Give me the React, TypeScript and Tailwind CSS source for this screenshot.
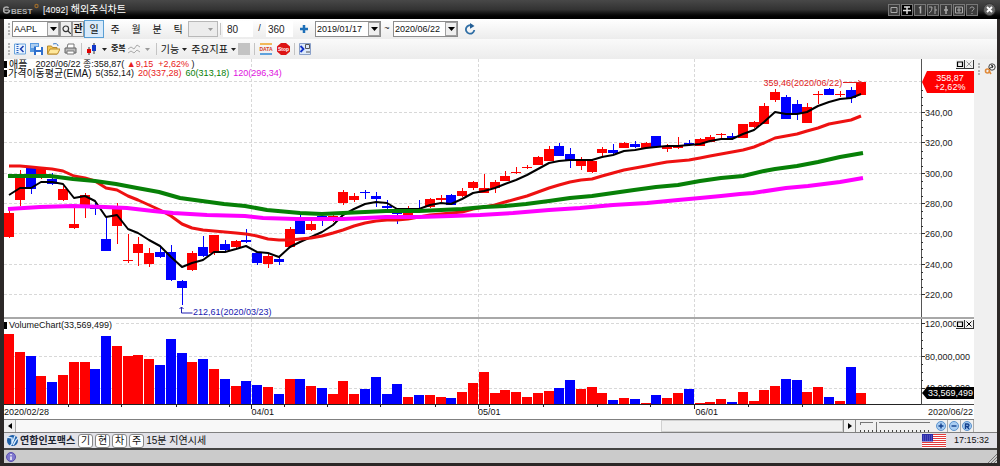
import type { ReactNode } from 'react';

const RED = '#ff0000';
const BLUE = '#0000ff';
const STEP = 10.79;
const FIRST = 9;
const PLOT_LEFT = 4;
const PLOT_WIDTH = 917;

type Candle = ['r' | 'b', number, number, number, number, number];

// colour, body top, body bottom, high, low, volume top
const candles: Candle[] = [
  ['r', 213, 237, 208, 238, 334], ['r', 174, 200, 170, 206, 352], ['b', 168, 189, 167, 194, 356], ['r', 167, 177, 167, 179, 376],
  ['b', 179, 184, 173, 185, 382], ['r', 189, 200, 186, 201, 375], ['r', 224, 228, 206, 229, 362], ['r', 195, 206, 193, 218, 362],
  ['b', 207, 209, 203, 215, 369], ['b', 239, 251, 217, 251, 336], ['r', 206, 226, 203, 244, 346], ['r', 260, 261, 234, 263, 356],
  ['r', 244, 253, 237, 266, 355], ['r', 253, 264, 248, 267, 359], ['b', 252, 257, 247, 258, 365], ['b', 252, 280, 245, 281, 339],
  ['b', 281, 288, 280, 305, 353], ['r', 253, 270, 251, 271, 362], ['b', 247, 256, 236, 257, 359], ['r', 235, 253, 235, 255, 369],
  ['b', 244, 250, 240, 251, 379], ['r', 241, 247, 240, 249, 386], ['b', 240, 242, 229, 243, 381], ['b', 253, 263, 252, 265, 385],
  ['r', 256, 264, 253, 268, 387], ['b', 259, 262, 256, 265, 394], ['r', 229, 247, 227, 248, 379], ['b', 220, 234, 215, 234, 379],
  ['r', 224, 230, 220, 231, 386], ['b', 216, 218, 214, 226, 388], ['r', 216, 221, 214, 222, 394], ['r', 192, 203, 190, 205, 381],
  ['r', 196, 200, 193, 202, 394], ['b', 192, 193, 190, 199, 389], ['b', 196, 199, 192, 207, 377], ['b', 206, 208, 200, 209, 394],
  ['b', 209, 214, 208, 224, 384], ['r', 210, 215, 206, 218, 397], ['b', 209, 211, 200, 212, 395], ['r', 199, 207, 198, 208, 395],
  ['r', 198, 200, 195, 202, 397], ['b', 195, 205, 194, 205, 398], ['r', 191, 196, 188, 197, 392], ['r', 182, 188, 181, 190, 383],
  ['r', 188, 193, 174, 193, 372], ['r', 182, 188, 180, 193, 393], ['r', 176, 181, 171, 181, 390], ['r', 172, 173, 167, 174, 392],
  ['r', 167, 168, 165, 169, 397], ['r', 157, 165, 156, 165, 393], ['r', 149, 161, 146, 161, 391], ['b', 146, 156, 143, 156, 388],
  ['b', 154, 160, 148, 168, 380], ['r', 159, 166, 157, 170, 389], ['r', 161, 172, 160, 173, 387], ['r', 149, 153, 147, 156, 393],
  ['b', 150, 153, 144, 154, 400], ['r', 143, 148, 142, 148, 398], ['b', 144, 147, 141, 148, 399], ['r', 143, 148, 142, 148, 403],
  ['b', 136, 147, 136, 148, 395], ['r', 146, 149, 144, 152, 398], ['r', 146, 148, 137, 149, 393], ['b', 143, 145, 140, 146, 389],
  ['r', 139, 146, 138, 146, 403], ['r', 137, 142, 135, 142, 402], ['r', 134, 135, 133, 138, 399], ['b', 136, 138, 133, 140, 402],
  ['r', 124, 138, 124, 138, 392], ['r', 122, 127, 121, 128, 401], ['r', 106, 124, 103, 124, 390], ['r', 92, 100, 89, 102, 386],
  ['b', 97, 119, 95, 119, 379], ['b', 104, 113, 100, 120, 380], ['r', 107, 123, 103, 123, 392], ['r', 94, 95, 91, 104, 387],
  ['b', 89, 95, 88, 95, 397], ['r', 94, 95, 91, 97, 401], ['b', 90, 98, 87, 103, 367], ['r', 82, 95, 82, 95, 393],
];

const ema5 = [
  195, 188, 188, 182, 182, 184, 198, 196, 201, 217, 215, 229, 233, 240, 246, 257, 267, 263, 260, 252, 252, 249, 246, 252, 253, 257,
  247, 242, 237, 232, 225, 215, 209, 204, 202, 203, 209, 209, 209, 205, 203, 204, 199, 193, 191, 188, 184, 180, 175, 169, 163, 161,
  160, 160, 160, 157, 155, 151, 150, 148, 147, 146, 146, 145, 144, 141, 139, 139, 134, 130, 122, 112, 114, 114, 112, 106, 102, 99,
  98, 94,
];

const ema20 = [
  166, 166, 167, 168, 169, 171, 176, 178, 181, 188, 190, 196, 200, 205, 210, 216, 224, 228, 230, 231, 232, 233, 234, 236, 239, 240,
  240, 239, 238, 236, 233, 230, 226, 223, 221, 220, 220, 219, 217, 215, 214, 213, 212, 209, 207, 205, 202, 199, 196, 192, 188, 185,
  182, 180, 179, 176, 173, 170, 168, 166, 164, 162, 161, 160, 158, 156, 154, 152, 150, 147, 143, 138, 136, 134, 131, 128, 124, 122,
  120, 116,
];

const ema60 =
  '8,176 50,176 73,179 95,181 116,184 137,188 159,192 180,198 202,201 224,204 245,206 267,210 278,211 300,213 322,214 343,213 365,212 386,211 419,211 441,210 462,209 484,207 505,206 526,204 549,201 570,198 592,196 613,193 634,190 656,187 678,185 700,181 721,178 743,176 764,171 775,169 797,166 818,162 840,157 863,153';

const ema120 =
  '8,209 40,207 73,206 105,207 127,208 153,211 173,213 207,215 245,216 263,218 297,219 343,219 386,217 419,217 451,216 480,215 513,213 549,210 580,208 613,205 647,203 678,200 700,198 721,196 740,194 753,193 786,188 808,186 840,182 863,178';

const priceTicks = [340, 320, 300, 280, 260, 240, 220];
const priceY = (price: number) => Math.round(112 + (340 - price) * 1.517);
const x = (i: number) => Math.round(FIRST + i * STEP);
const toPoints = (values: number[]) => values.map((v, i) => `${x(i)},${v}`).join(' ');
const monthLines = [251, 478, 694];
const weekTicks = [68, 121, 176, 229, 284, 327, 380, 435, 489, 543, 597, 650, 748, 802];

function Grip() {
  return <span className="h-3 w-0 shrink-0 border-l-2 border-dotted border-[#b4b4b4]" />;
}

function Divider() {
  return <span className="h-3 w-px shrink-0 bg-[#c4c4c4]" />;
}

function Combo({ label, value, className }: { label: string; value: string; className: string }) {
  return (
    <div className={`relative h-4 shrink-0 border border-[#8c8c8c] bg-white ${className}`}>
      <select aria-label={label} className="block h-full w-full appearance-none bg-transparent pl-px leading-none outline-none">
        <option>{value}</option>
      </select>
      <span className="pointer-events-none absolute inset-y-0 right-0 flex w-3 items-center justify-center border border-[#a0a0a0] bg-[#efefef]">
        <svg viewBox="0 0 7 4" className="h-1 w-[7px]"><path d="M0 0h7L3.5 4z" fill="#000" /></svg>
      </span>
    </div>
  );
}

function Caret({ color = '#222' }: { color?: string }) {
  return <svg viewBox="0 0 5 3" className="h-[3px] w-[5px] shrink-0"><path d="M0 0h5L2.5 3z" fill={color} /></svg>;
}

function TitleButton({ label, active, children }: { label: string; active?: boolean; children: ReactNode }) {
  return (
    <button aria-label={label} className={`size-3 border border-[#777] text-[#aaa] ${active ? 'bg-black' : 'bg-[#3c3c3c]'}`}>
      <svg viewBox="0 0 10 10" className="size-full" fill="none" stroke="currentColor">{children}</svg>
    </button>
  );
}

function TitleBar() {
  return (
    <header className="flex h-[19px] items-center justify-between bg-linear-to-b from-[#484848] via-[#333] via-50% to-black pr-1 pl-[3px] text-white">
      <div className="flex items-center">
        <svg viewBox="0 0 36 16" className="h-4 w-9" aria-label="eBEST">
          <circle cx="3.5" cy="8" r="3" fill="none" stroke="#aaa" strokeWidth="1.6" strokeDasharray="16 3" />
          <path d="M1 8h5" stroke="#aaa" strokeWidth="1.2" />
          <text x="8" y="12" fill="#b0b0b0" fontSize="8" fontWeight="700">BEST</text>
          <circle cx="33.5" cy="4" r="1.6" fill="none" stroke="#9a6a2c" strokeWidth="1.2" />
        </svg>
        <h1 className="pl-1 text-[10px]"><span className="text-[9px]">[4092]</span> 해외주식차트</h1>
      </div>
      <div className="flex items-center gap-px">
        <TitleButton label="Restore"><path d="M2 2.5h6v5H2z" /></TitleButton>
        <TitleButton label="Pin" active><path d="M2 2h6M5 2v7M1 5.5h8" stroke="#ddd" strokeWidth="1.5" /></TitleButton>
        <TitleButton label="Screen 1"><path d="M4 3l1.5-1v6.5" strokeWidth="1.5" /></TitleButton>
        <TitleButton label="Font"><path d="M1 2h3c0 3-1 5-3 6M7 1v8M7 5h2" /></TitleButton>
        <TitleButton label="Move"><path d="M5 1v8M3 5h4" strokeWidth="1.5" /></TitleButton>
        <TitleButton label="Add window"><path d="M1.5 2h7v6h-7zM3 5h4M5 2.5v5" /></TitleButton>
        <TitleButton label="Help"><path d="M3 3.5c0-2 4-2 4 0C7 5 5 5 5 6.500M5 8v1" /></TitleButton>
        <button aria-label="Close" className="ml-1 size-[13px] rounded-full border border-[#333] bg-[#666]">
          <svg viewBox="0 0 11 11" className="size-full"><path d="M3 3l5 5M8 3l-5 5" stroke="#fff" strokeWidth="1.8" /></svg>
        </button>
      </div>
    </header>
  );
}

function PeriodToolbar() {
  return (
    <div className="flex h-5 items-center bg-linear-to-b from-white to-[#ececec] pl-1 text-[9px]">
      <Grip />
      <div className="flex items-center pl-0.5">
        <Combo label="종목" value="AAPL" className="w-12" />
        <button aria-label="종목 검색" className="flex h-4 w-3 items-center justify-center border border-[#999] bg-[#eee]">
          <svg viewBox="0 0 9 9" className="size-[9px]" fill="none" stroke="#333" strokeWidth="1.2"><circle cx="3.8" cy="3.8" r="2.8" /><path d="M6 6l3 3" /></svg>
        </button>
        <button className="h-4 w-3 border border-[#999] bg-[#eee] text-[10px] leading-none font-bold">관</button>
      </div>
      <div className="flex items-center gap-px text-[10px]">
        <button className="h-[18px] w-5 border border-[#5a9fd4] bg-[#d8eafa]">일</button>
        <button className="h-4 w-5">주</button>
        <button className="h-4 w-5">월</button>
        <button className="h-4 w-5">분</button>
        <button className="h-4 w-5">틱</button>
      </div>
      <button disabled aria-label="틱 단위" className="flex h-4 w-[30px] items-center justify-end border border-[#b8b8b8] bg-[#ececec] pr-1">
        <Caret color="#999" />
      </button>
      <span className="mx-0.5 h-3 w-px bg-[#c4c4c4]" />
      <input aria-label="봉 개수" defaultValue="80" className="h-4 w-[30px] bg-white pl-1 text-[10px] text-[#222] outline-none" />
      <span className="w-[13px] text-center">/</span>
      <input aria-label="조회 개수" defaultValue="360" className="h-4 w-[27px] bg-white pl-0.5 text-[10px] text-[#222] outline-none" />
      <button aria-label="늘리기" className="mx-[7px] size-2">
        <svg viewBox="0 0 8 8" className="size-2"><path d="M4 0v8M0 4h8" stroke="#1d6fb8" strokeWidth="2.5" /></svg>
      </button>
      <Combo label="시작일" value="2019/01/17" className="w-[66px]" />
      <span className="w-3 text-center">~</span>
      <Combo label="종료일" value="2020/06/22" className="w-[65px]" />
      <button aria-label="새로고침" className="ml-1.5 size-3">
        <svg viewBox="0 0 12 12" className="size-3" fill="none"><path d="M8.5 3A4.2 4.2 0 1 0 10.300 7" stroke="#2f6ea5" strokeWidth="1.8" /><path d="M6 0l4.5 3L6 5.800z" fill="#245f96" /></svg>
      </button>
    </div>
  );
}

function IconToolbar() {
  return (
    <div className="flex h-5 items-center bg-linear-to-b from-[#fafafa] to-[#ececec] pl-1 text-[10px]">
      <Grip />
      <div className="flex items-center gap-1 pr-1 pl-1">
        <button aria-label="패널"><svg viewBox="0 0 12 12" className="size-3" fill="none"><path d="M.5 1h11v10H.5z" stroke="#6aa5dc" fill="#eaf4ff" /><path d="M3.5 1v10" stroke="#2b62c0" strokeDasharray="1 1" strokeWidth="2" /><path d="M9.5 3L6.5 6l3 3" stroke="#1a3fb0" strokeWidth="1.5" /></svg></button>
        <button aria-label="저장"><svg viewBox="0 0 13 12" className="h-3 w-[13px]"><path d="M0 0h9v9H0z" fill="#5a9be0" /><path d="M1 2h7M1 4h3" stroke="#fff" /><path d="M4 4h9v8H4z" fill="#2f6fcc" /><path d="M6 4h5v3H6zM6 9h5v3H6z" fill="#fff" /></svg></button>
        <button aria-label="열기"><svg viewBox="0 0 13 12" className="h-3 w-[13px]"><path d="M.5 11V3h4l1 1.5H10V11z" fill="#f4c753" stroke="#b98a2c" /><path d="M.5 11l2.5-5h10l-2.5 5z" fill="#ffe79a" stroke="#b98a2c" /><path d="M6 1c3-1 5 0 5 2" fill="none" stroke="#3c7ac4" /></svg></button>
        <button aria-label="인쇄"><svg viewBox="0 0 13 12" className="h-3 w-[13px]"><path d="M3 5l1-4h6v4" fill="#fff" stroke="#777" /><path d="M1 5h11v5H1z" fill="#bbb" stroke="#666" /><path d="M3 8h7v3H3z" fill="#fff" stroke="#777" /></svg></button>
      </div>
      <Divider />
      <button aria-label="차트 종류" className="ml-1 flex items-center gap-1">
        <svg viewBox="0 0 12 12" className="size-3"><path d="M3 4v8M8 0v11" stroke="#333" /><path d="M1 6h4v4H1z" fill="#e00000" /><path d="M6 2h4v6H6z" fill="#1237c8" /></svg>
        <Caret />
      </button>
      <button className="ml-1 text-[8px] leading-none font-bold">중복</button>
      <button disabled aria-label="지표선" className="mr-1.5 ml-0.5 flex items-center gap-1">
        <svg viewBox="0 0 13 12" className="h-3 w-[13px]" fill="none" stroke="#aaa"><path d="M0 6l3-2 3 2 3-4 3 2M0 10l3-2 3 2 3-3 3 2" /></svg>
        <Caret color="#999" />
      </button>
      <Divider />
      <button className="ml-1 flex items-center gap-[3px]">기능<Caret /></button>
      <button className="ml-1 flex items-center gap-[3px]">주요지표<Caret /></button>
      <span className="mr-1 ml-0.5 size-3 bg-[#c3c3c3]" />
      <Divider />
      <button aria-label="DATA" className="ml-1">
        <svg viewBox="0 0 14 12" className="h-3 w-3.5"><path d="M1 1h12" stroke="#f1b95b" strokeWidth="2" /><path d="M1 11h12" stroke="#5ea1dc" strokeWidth="2" /><text x="7" y="8" textAnchor="middle" fontSize="5" fontWeight="700" fill="#d2401e">DATA</text></svg>
      </button>
      <button aria-label="Stop" className="mr-1 ml-1">
        <svg viewBox="0 0 13 12" className="h-3 w-[13px]"><path d="M4 0h5l4 3.5v5L9 12H4L0 8.5v-5z" fill="#dc1414" /><text x="6.5" y="8" textAnchor="middle" fontSize="5" fontWeight="700" fill="#fff">Stop</text></svg>
      </button>
      <Divider />
      <button aria-label="도구 펼치기" className="ml-1"><svg viewBox="0 0 12 12" className="size-3" fill="none"><path d="M.5.5h11v11H.5z" fill="#dce9fa" stroke="#8aa0c8" /><path d="M1.5 3l3 3-3 3" stroke="#1232c8" strokeWidth="1.8" /><path d="M6.5 1.5h4v4h-4zM7 9h4" stroke="#555" /></svg></button>
    </div>
  );
}

function PaneButtons({ muted }: { muted?: boolean }) {
  return (
    <div className="absolute top-px right-0 flex bg-[#f0f0f0]">
      <button aria-label="창 확대" className="size-[9px] border-r border-b border-[#333]"><svg viewBox="0 0 8 8" className="size-2"><path d="M1.5 2h5v4.5h-5z" fill="none" stroke="#000" strokeWidth="1.2" /></svg></button>
      <button aria-label="창 닫기" className="size-[9px] border-r border-b border-[#333]"><svg viewBox="0 0 8 8" className="size-2"><path d="M1.5 1.5l5 5M6.5 1.5l-5 5" stroke={muted ? '#999' : '#000'} /></svg></button>
    </div>
  );
}

function PricePane() {
  return (
    <section className="flex h-[258px] bg-white">
      <div className="relative min-w-0 flex-1">
        <svg viewBox={`${PLOT_LEFT} 59 ${PLOT_WIDTH} 258`} preserveAspectRatio="none" className="block h-full w-full">
          <g stroke="#d8d8d8" strokeDasharray="3 2" shapeRendering="crispEdges">
            <path d="M4 81.5H921" />
            {priceTicks.map((p) => <path key={p} d={`M4 ${priceY(p) + 0.5}H921`} />)}
            {monthLines.map((m) => <path key={m} d={`M${m + 0.5} 59V317`} />)}
          </g>
          <g shapeRendering="crispEdges">
            {candles.map(([tone, top, bottom, high, low], i) => (
              <g key={i} fill={tone === 'r' ? RED : BLUE}>
                <rect x={x(i)} y={high} width="1" height={low - high} />
                <rect x={x(i) - 5} y={top} width="10" height={bottom - top} />
              </g>
            ))}
          </g>
          <g fill="none" strokeLinejoin="round">
            <polyline points={toPoints(ema5)} stroke="#000" strokeWidth="2" />
            <polyline points={toPoints(ema20)} stroke="#ee1111" strokeWidth="3" />
            <polyline points={ema60} stroke="#078007" strokeWidth="4" />
            <polyline points={ema120} stroke="#ff00ff" strokeWidth="4" />
          </g>
          <path d="M843 82.5h19M858 80.5l4 2-4 2" fill="none" stroke="#e02020" />
          <path d="M181.5 307v6h11M179.5 309l2-2 2 2" fill="none" stroke="#2020b0" />
        </svg>
        <div className="absolute top-px left-0 text-[9px] leading-[9px] whitespace-pre">
          <p className="flex items-center">
            <span className="mr-0.5 h-[7px] w-[3px] bg-black" />
            <span className="mr-2 text-[10px]">애플</span>
            2020/06/22 종:358,87( <span className="text-[#e82020]">▲9,15&nbsp; +2,62%</span> )
          </p>
          <p className="flex items-center gap-1">
            <span className="flex items-center text-[10px]"><span className="mr-px h-[7px] w-[3px] bg-black" />가격이동평균(EMA)</span>
            <span>5(352,14)</span>
            <span className="text-[#e82020]">20(337,28)</span>
            <span className="text-[#078007]">60(313,18)</span>
            <span className="text-[#e010e0]">120(296,34)</span>
          </p>
        </div>
        <span className="absolute top-[18px] right-[8.6%] text-[9px] leading-3 text-[#e02020]">359,46(2020/06/22)</span>
        <span className="absolute top-[247px] left-[20.6%] text-[9px] leading-3 text-[#2020b0]">212,61(2020/03/23)</span>
      </div>
      <div className="relative w-[53px] shrink-0">
        <svg viewBox="921 59 53 258" className="block h-full w-full" fontSize="9">
          <path d="M921.5 59v258" stroke="#555" />
          <g stroke="#333" shapeRendering="crispEdges">
            {priceTicks.map((p) => <path key={p} d={`M921 ${priceY(p) + 0.5}h4M921 ${priceY(p) - 6.5}h2M921 ${priceY(p) - 14.5}h2M921 ${priceY(p) - 21.5}h2`} />)}
          </g>
          {priceTicks.map((p) => <text key={p} x="925" y={priceY(p) + 4} fill="#222">{`${p},00`}</text>)}
          <path d="M922 82l5-11h47v22h-47z" fill={RED} />
          <text x="950" y="81" textAnchor="middle" fill="#fff">358,87</text>
          <text x="950" y="90" textAnchor="middle" fill="#fff">+2,62%</text>
        </svg>
        <PaneButtons muted />
      </div>
    </section>
  );
}

function VolumePane() {
  return (
    <section className="flex h-[102px] border-t-2 border-[#a8a8a8] bg-white text-[9px] leading-3">
      <div className="relative min-w-0 flex-1">
        <svg viewBox={`${PLOT_LEFT} 319 ${PLOT_WIDTH} 100`} preserveAspectRatio="none" className="block h-full w-full" shapeRendering="crispEdges">
          <g stroke="#d8d8d8" strokeDasharray="3 2">
            <path d="M116 323.5H921M4 356.5H921M4 388.5H921" />
            {monthLines.map((m) => <path key={m} d={`M${m + 0.5} 319V404`} />)}
          </g>
          {candles.map(([tone, , , , , top], i) => (
            <rect key={i} x={x(i) - 5} y={top} width="10" height={404 - top} fill={tone === 'r' ? RED : BLUE} />
          ))}
          <g stroke="#222">
            <path d="M4 404.5H921" />
            {weekTicks.map((t) => <path key={t} d={`M${t + 0.5} 404v3`} />)}
            {monthLines.map((t) => <path key={t} d={`M${t + 0.5} 404v5`} />)}
          </g>
        </svg>
        <p className="absolute top-0 left-0 flex items-center"><span className="mr-0.5 h-[7px] w-[3px] bg-black" />VolumeChart(33,569,499)</p>
        <span className="absolute bottom-px left-0">2020/02/28</span>
        <span className="absolute bottom-px left-[27%]">04/01</span>
        <span className="absolute bottom-px left-[51.7%]">05/01</span>
        <span className="absolute bottom-px left-[75.4%]">06/01</span>
      </div>
      <div className="relative w-[53px] shrink-0">
        <svg viewBox="921 319 53 100" className="block h-full w-full" fontSize="9">
          <path d="M921.5 319v86M921 404.5h53" stroke="#444" />
          <path d="M921 323.5h4M921 332.5h2M921 340.5h2M921 348.5h2M921 356.5h4M921 364.5h2M921 372.5h2M921 380.5h2M921 388.5h4" stroke="#333" />
          <text x="925" y="327" fill="#222">120,000</text>
          <text x="925" y="360" fill="#222">80,000,000</text>
          <text x="925" y="391" fill="#222">40,000,000</text>
          <path d="M922 393l5-6h47v12h-47z" fill="#000" />
          <text x="973" y="396" textAnchor="end" fill="#fff">33,569,499</text>
          <text x="973" y="415" textAnchor="end" fill="#222">2020/06/22</text>
        </svg>
        <PaneButtons />
      </div>
    </section>
  );
}

function ZoomButton({ label, d }: { label: string; d: string }) {
  return (
    <button aria-label={label} className="flex h-3 w-[13px] items-center justify-center border-r border-[#aaa] bg-[#f0f0f0]">
      <svg viewBox="0 0 10 10" className="size-[10px]"><circle cx="5" cy="5" r="4.5" fill="#a9cdf2" stroke="#5c93cc" /><path d={d} fill="none" stroke="#123f8c" strokeWidth="1.4" /></svg>
    </button>
  );
}

function ScrollRow() {
  return (
    <div className="flex h-[13px] border-t border-[#808080] bg-[#f0f0f0]">
      <button aria-label="왼쪽" className="flex w-3 items-center justify-center border-r border-[#aaa]"><svg viewBox="0 0 4 6" className="h-1.5 w-1"><path d="M4 0v6L0 3z" /></svg></button>
      <div className="flex flex-1 justify-end bg-[#f8f8f8]"><div className="w-[22%] border border-[#d0d0d0] bg-[#f0f0f0]" /></div>
      <button aria-label="오른쪽" className="flex w-[13px] items-center justify-center border-x border-[#888]"><svg viewBox="0 0 4 6" className="h-1.5 w-1"><path d="M0 0v6l4-3z" /></svg></button>
      <div className="relative w-[79px]">
        <svg viewBox="0 0 79 12" className="absolute inset-0 h-full w-full" shapeRendering="crispEdges">
          <path d="M4.500 5V2.500H19M23 2.500H74" fill="none" stroke="#777" />
          <path d="M4 11h72" stroke="#444" strokeWidth="2" strokeDasharray="1 3" />
        </svg>
        <input
          type="range"
          aria-label="차트 간격"
          defaultValue="22"
          className="absolute inset-0 h-full w-full appearance-none bg-transparent [&::-webkit-slider-thumb]:h-2 [&::-webkit-slider-thumb]:w-1 [&::-webkit-slider-thumb]:appearance-none [&::-webkit-slider-thumb]:border-r [&::-webkit-slider-thumb]:border-[#777] [&::-webkit-slider-thumb]:bg-[#f0f0f0]"
        />
      </div>
      <ZoomButton label="확대" d="M5 2.5v5M2.5 5h5" />
      <ZoomButton label="축소" d="M2.5 5h5" />
      <ZoomButton label="원래대로" d="M3.5 8V3h2c2 0 2 2.5 0 2.5h-2M5 5.5L7 8" />
    </div>
  );
}

function StatusBar() {
  return (
    <div className="flex h-4 items-center border-t border-[#808080] bg-[#e2e2e8] pr-2 text-[10px] leading-none">
      <svg viewBox="0 0 13 13" className="ml-0.5 size-[13px]"><circle cx="6.5" cy="6.5" r="5.5" fill="#1d5fa8" /><path d="M1 3l5 1v5M9 2C7 6 7 10 4 12M12 4C9 6 9 9 7 11" fill="none" stroke="#d8ecff" strokeWidth="1.4" /></svg>
      <strong className="ml-px text-[#1c2431]">연합인포맥스</strong>
      <div className="ml-[3px] flex gap-0.5">
        {['기', '현', '차', '주'].map((name) => (
          <button key={name} className="h-3.5 w-[15px] rounded-[3px] border border-[#888] bg-white leading-none">{name}</button>
        ))}
      </div>
      <span className="ml-0.5">15분 지연시세</span>
      <svg viewBox="0 0 24 14" className="ml-auto h-3.5 w-6" aria-label="USA">
        <path fill="#fff" d="M0 0h24v14H0z" />
        <path d="M0 .5h24M0 2.5h24M0 4.5h24M0 6.5h24M0 8.5h24M0 10.5h24M0 12.5h24" stroke="#e23b3b" strokeWidth="1.2" />
        <path fill="#2a2aa8" d="M0 0h11v7.5H0z" />
        <path d="M1 2h9M1 4h9M1 6h9" stroke="#8f8fe0" strokeWidth=".7" strokeDasharray="1 1" />
      </svg>
      <time className="ml-2 text-[9px]">17:15:32</time>
    </div>
  );
}

export default function App() {
  return (
    <div className="w-full overflow-hidden bg-[#2c2827] font-['Liberation_Sans','Noto_Sans_CJK_KR',sans-serif] text-[#111]">
      <TitleBar />
      <div className="border-r-3 border-b-3 border-l-4 border-[#2c2827]">
        <PeriodToolbar />
        <IconToolbar />
        <main className="flex bg-[#f0f0f0]">
          <div className="min-w-0 flex-1">
            <PricePane />
            <VolumePane />
            <ScrollRow />
          </div>
          <aside className="flex w-[23px] items-start gap-1 pt-1 pl-1">
            <Grip />
            <button aria-label="도구">
              <svg viewBox="0 0 12 12" className="size-3" fill="none"><circle cx="8" cy="4" r="3.2" stroke="#444" /><path d="M5 6l4-3M7 2l2 1-1 2" stroke="#222" /><circle cx="3.5" cy="8" r="2" stroke="#e08a3a" strokeWidth="1.6" /><path d="M5 8l2 3" stroke="#e08a3a" strokeWidth="1.5" /></svg>
            </button>
          </aside>
        </main>
        <StatusBar />
        <footer className="flex h-[15px] items-center justify-between border-t-2 border-[#444] bg-[#cbcbcb] pl-0.5">
          <svg viewBox="0 0 10 10" className="size-[10px]"><circle cx="5" cy="5" r="4.5" fill="#8078cf" stroke="#5a4fae" /><path d="M5 4.500v3.500M5 2v1.300" stroke="#fff" strokeWidth="1.4" /></svg>
          <svg viewBox="0 0 10 10" className="size-[10px] self-end"><path d="M1 10l9-9M4 10l6-6M7 10l3-3" stroke="#777" /></svg>
        </footer>
      </div>
    </div>
  );
}
